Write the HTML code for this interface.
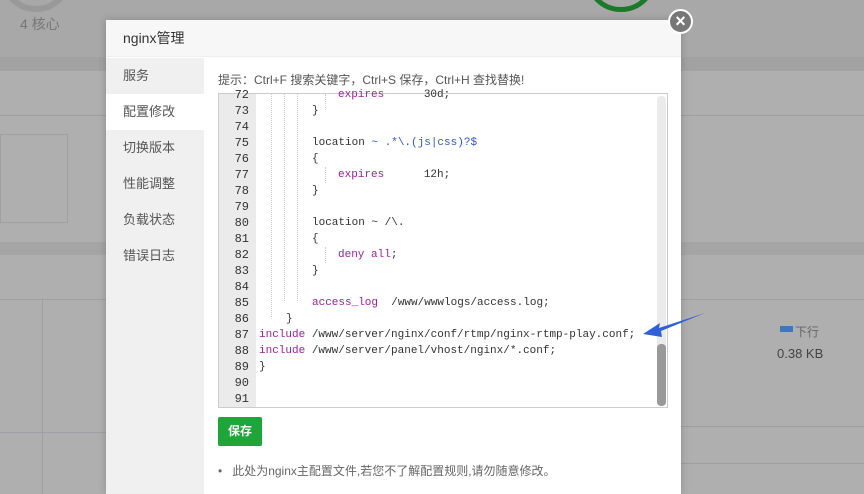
<!DOCTYPE html>
<html><head><meta charset="utf-8"><style>
*{margin:0;padding:0;box-sizing:border-box}
body{width:864px;height:494px;overflow:hidden;position:relative;background:#afafaf;font-family:"Liberation Sans","Noto Sans CJK SC",sans-serif}
.abs{position:absolute}
.code{position:absolute;font-family:"Liberation Mono","DejaVu Sans Mono",monospace;font-size:11px;color:#333;white-space:pre;line-height:16px}
.ln{position:absolute;left:219px;width:30px;text-align:right;font-family:"Liberation Mono",monospace;font-size:12px;color:#333;line-height:16px}
.k{color:#a020a0}.b{color:#3355cc}
.g{position:absolute;width:0;border-left:1px dotted #ccc;height:16px}
.nav{position:absolute;left:106px;width:98px;height:36px;line-height:36px;padding-left:17px;font-size:13px;color:#555}
</style></head><body>
<div class="abs" style="left:0;top:0;width:864px;height:57px;background:#a8a8a8"></div>
<div class="abs" style="left:0;top:57px;width:864px;height:14px;background:#a2a2a2"></div>
<div class="abs" style="left:0;top:115px;width:864px;height:1px;background:#9e9e9e"></div>
<div class="abs" style="left:0;top:134px;width:68px;height:89px;border:1px solid #a0a0a0"></div>
<div class="abs" style="left:0;top:242px;width:864px;height:13px;background:#a5a5a5"></div>
<div class="abs" style="left:0;top:299px;width:864px;height:1px;background:#a09fa8"></div>
<div class="abs" style="left:0;top:432px;width:106px;height:1px;background:#a09fa8"></div>
<div class="abs" style="left:42px;top:299px;width:1px;height:195px;background:#a09fa8"></div>
<div class="abs" style="left:681px;top:426px;width:183px;height:1px;background:#9e9e9e"></div>
<div class="abs" style="left:681px;top:463px;width:183px;height:1px;background:#9e9e9e"></div>
<div class="abs" style="left:0;top:-60px;width:72px;height:72px;border-radius:50%;border:6px solid #999;"></div>
<div class="abs" style="left:20px;top:14px;font-size:14px;color:#777">4 核心</div>
<div class="abs" style="left:585px;top:-60px;width:72px;height:72px;border-radius:50%;border:5px solid #1a7a2a;"></div>
<div class="abs" style="left:780px;top:326px;width:13px;height:6px;background:#3a78c0"></div>
<div class="abs" style="left:795px;top:323px;font-size:12px;color:#666">下行</div>
<div class="abs" style="left:777px;top:346px;font-size:13px;color:#444">0.38 KB</div>

<div class="abs" style="left:106px;top:20px;width:575px;height:474px;background:#fff;box-shadow:0 0 8px rgba(0,0,0,.2)"></div>
<div class="abs" style="left:106px;top:20px;width:575px;height:37px;background:#f7f7f7;border-bottom:1px solid #eee;padding-left:17px;line-height:37px;font-size:14px;color:#333">nginx管理</div>
<div class="abs" style="left:106px;top:58px;width:98px;height:436px;background:#f0f0f0"></div>
<div class="nav" style="top:58px">服务</div>
<div class="nav" style="top:94px;background:#fff">配置修改</div>
<div class="nav" style="top:130px">切换版本</div>
<div class="nav" style="top:166px">性能调整</div>
<div class="nav" style="top:202px">负载状态</div>
<div class="nav" style="top:238px">错误日志</div>
<div class="abs" style="left:668px;top:9px;width:25px;height:25px;border-radius:50%;background:#777;border:2px solid #fff;color:#fff;text-align:center;line-height:20px;font-size:18px;font-weight:bold">×</div>

<div class="abs" style="left:218px;top:71px;font-size:12px;color:#555">提示：Ctrl+F 搜索关键字，Ctrl+S 保存，Ctrl+H 查找替换!</div>
<div class="abs" style="left:218px;top:93px;width:450px;height:315px;border:1px solid #ccc;overflow:hidden;background:#fff">
<div class="abs" style="left:0;top:0;width:37px;height:315px;background:#ebebeb"></div>
<div class="abs" style="left:438px;top:2px;width:9px;height:310px;background:#ebebeb;border-radius:4px"></div>
<div class="abs" style="left:438px;top:250px;width:9px;height:62px;background:#999;border-radius:4px"></div>
</div>
<div style="position:absolute;left:0;top:0">
<div class="ln" style="top:87px">72</div><div class="code" style="left:338px;top:87px"><span class="k">expires</span>      30d;</div>
<div class="ln" style="top:103px">73</div><div class="code" style="left:312px;top:103px">}</div>
<div class="ln" style="top:119px">74</div>
<div class="ln" style="top:135px">75</div><div class="code" style="left:312px;top:135px">location <span class="b">~ .*\.(js|css)?$</span></div>
<div class="ln" style="top:151px">76</div><div class="code" style="left:312px;top:151px">{</div>
<div class="ln" style="top:167px">77</div><div class="code" style="left:338px;top:167px"><span class="k">expires</span>      12h;</div>
<div class="ln" style="top:183px">78</div><div class="code" style="left:312px;top:183px">}</div>
<div class="ln" style="top:199px">79</div>
<div class="ln" style="top:215px">80</div><div class="code" style="left:312px;top:215px">location ~ /\.</div>
<div class="ln" style="top:231px">81</div><div class="code" style="left:312px;top:231px">{</div>
<div class="ln" style="top:247px">82</div><div class="code" style="left:338px;top:247px"><span class="k">deny</span> <span class="k">all</span>;</div>
<div class="ln" style="top:263px">83</div><div class="code" style="left:312px;top:263px">}</div>
<div class="ln" style="top:279px">84</div>
<div class="ln" style="top:295px">85</div><div class="code" style="left:312px;top:295px"><span class="k">access_log</span>  /www/wwwlogs/access.log;</div>
<div class="ln" style="top:311px">86</div><div class="code" style="left:286px;top:311px">}</div>
<div class="ln" style="top:327px">87</div><div class="code" style="left:259px;top:327px"><span class="k">include</span> /www/server/nginx/conf/rtmp/nginx-rtmp-play.conf;</div>
<div class="ln" style="top:343px">88</div><div class="code" style="left:259px;top:343px"><span class="k">include</span> /www/server/panel/vhost/nginx/*.conf;</div>
<div class="ln" style="top:359px">89</div><div class="code" style="left:259px;top:359px">}</div>
<div class="ln" style="top:375px">90</div>
<div class="ln" style="top:391px">91</div>
</div>
<div class="g" style="left:271px;top:94px;height:223px"></div>
<div class="g" style="left:284px;top:94px;height:207px"></div>
<div class="g" style="left:297px;top:94px;height:207px"></div>
<div class="g" style="left:325px;top:94px;height:16px"></div>
<div class="g" style="left:325px;top:167px;height:16px"></div>
<div class="g" style="left:325px;top:247px;height:16px"></div>

<svg class="abs" style="left:640px;top:310px" width="70" height="30"><polygon points="3,24 20,13 19,18 65,3 21,21 22,27" fill="#3060d8"/></svg>

<div class="abs" style="left:218px;top:417px;width:44px;height:29px;background:#20a53a;border-radius:2px;color:#fff;font-size:12px;font-weight:bold;text-align:center;line-height:29px">保存</div>
<div class="abs" style="left:218px;top:462px;font-size:12px;color:#666">•&nbsp;&nbsp;&nbsp;此处为nginx主配置文件,若您不了解配置规则,请勿随意修改。</div>
</body></html>
